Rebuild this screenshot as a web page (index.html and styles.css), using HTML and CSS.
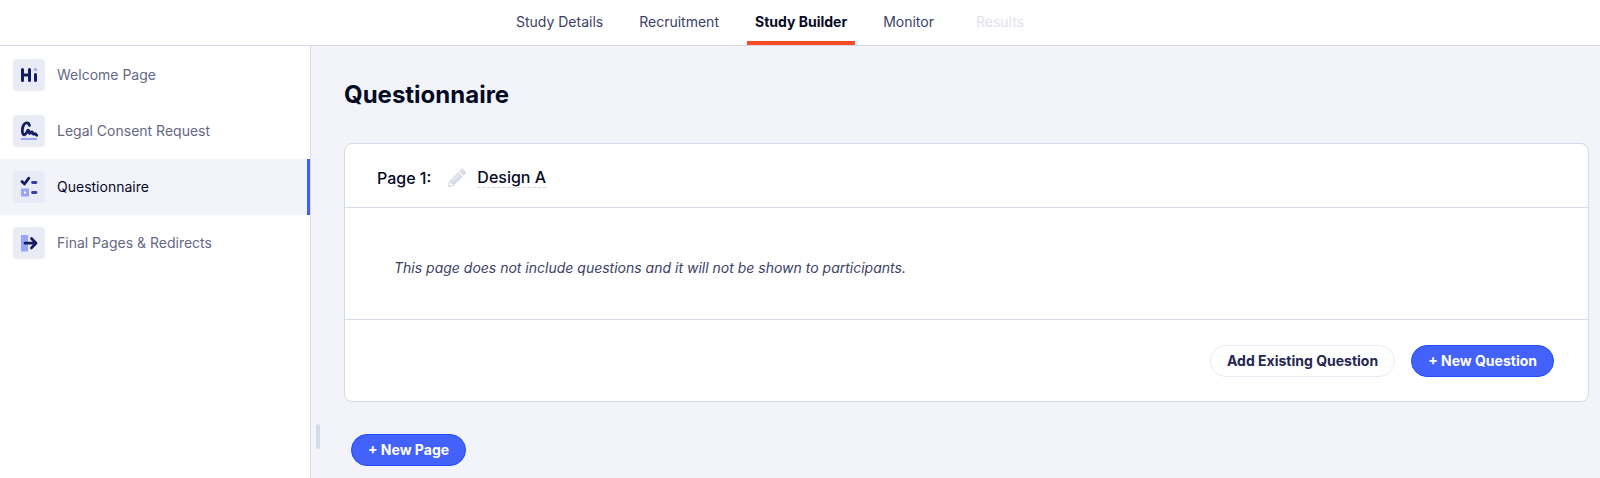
FILE: index.html
```html
<!DOCTYPE html>
<html lang="en">
<head>
  <meta charset="UTF-8" />
  <meta name="viewport" content="width=device-width, initial-scale=1" />
  <title>Study Builder</title>
  <link rel="stylesheet" href="styles.css">
</head>
<body>
  <header class="topbar">
    <nav class="tabs">
      <a class="tab" href="#details">Study Details</a>
      <a class="tab" href="#recruitment">Recruitment</a>
      <a class="tab active" href="#builder">Study Builder</a>
      <a class="tab short" href="#monitor">Monitor</a>
      <a class="tab short disabled" href="#results" aria-disabled="true">Results</a>
    </nav>
  </header>

  <div class="layout">
    <nav class="sidebar">
      <a class="side-item" href="#welcome">
        <svg class="side-icon" viewBox="0 0 32 32">
          <path d="M9.5 10.5v11M16.5 10.5v11M9.5 16h7M22.5 15.5v6" fill="none" stroke="#141c62" stroke-width="3" stroke-linecap="round"/>
          <circle cx="22.5" cy="10.5" r="1.6" fill="#98a5f8"/>
        </svg>
        Welcome Page
      </a>
      <a class="side-item" href="#consent">
        <svg class="side-icon" viewBox="0 0 32 32">
          <path d="M16.5 10.5C15.8 7.4 12.5 7 10.8 9.8 9.2 12.5 8.8 17 10 19.1c1.3 2 3.2-.4 4.4-3.1.5-1.2 1.6-.8 1.6.5 0 1.6.6 2.6 1.7 1.1.8-1.2 1.8-.8 1.9.4.1 1.3 1.2 1.4 2 .8.8-.7 1.2 1 2.2 1.4" fill="none" stroke="#141c62" stroke-width="2.8" stroke-linecap="round" stroke-linejoin="round"/>
          <path d="M8 24h16" stroke="#98a5f8" stroke-width="2"/>
        </svg>
        Legal Consent Request
      </a>
      <a class="side-item active" href="#questionnaire">
        <svg class="side-icon" viewBox="0 0 32 32">
          <path d="M9 10.5l2.5 2.5 4.3-5.8" fill="none" stroke="#141c62" stroke-width="2.8" stroke-linecap="round" stroke-linejoin="round"/>
          <path d="M19.5 11.5h3.5M19.5 21.5h3.5" stroke="#3440ac" stroke-width="2.8" stroke-linecap="round"/>
          <rect x="8" y="17.5" width="8" height="8" fill="#98a5f8"/>
          <rect x="11" y="20.5" width="2" height="2" fill="#fff"/>
        </svg>
        Questionnaire
      </a>
      <a class="side-item" href="#final">
        <svg class="side-icon" viewBox="0 0 32 32">
          <rect x="8" y="8" width="7" height="16.5" fill="#98a5f8"/>
          <path d="M12 16.2h11M18.5 11.5l4.5 4.7-4.5 4.7" fill="none" stroke="#141c62" stroke-width="2.8" stroke-linecap="round" stroke-linejoin="round"/>
        </svg>
        Final Pages &amp; Redirects
      </a>
    </nav>

    <div class="splitter"><span class="handle"></span></div>

    <main class="content">
      <h1>Questionnaire</h1>

      <section class="card">
        <div class="card-header">
          <span>Page 1:</span>
          <svg class="pencil" viewBox="0 0 512 512">
            <path fill="#d9dbeb" d="M497.9 142.1l-46.1 46.1c-4.7 4.7-12.3 4.7-17 0l-111-111c-4.7-4.7-4.7-12.3 0-17l46.1-46.1c18.7-18.7 49.1-18.7 67.9 0l60.1 60.1c18.8 18.7 18.8 49.1 0 67.9zM284.2 99.8L21.6 362.4.4 483.9c-2.9 16.4 11.4 30.6 27.8 27.8l121.5-21.3 262.6-262.6c4.7-4.7 4.7-12.3 0-17l-111-111c-4.8-4.7-12.4-4.7-17.1 0z"/>
            <path d="M88 424h48v36.300l-64.500 11.300-31.100-31.100L51.700 376H88v48z" fill="#fff"/>
            <path d="M134 330l154-154" stroke="#fff" stroke-width="24" stroke-linecap="round"/>
          </svg>
          <span class="page-name">Design A</span>
        </div>
        <p class="card-body">This page does not include questions and it will not be shown to participants.</p>
        <div class="card-footer">
          <button class="btn" type="button">Add Existing Question</button>
          <button class="btn primary" type="button">+ New Question</button>
        </div>
      </section>

      <div class="page-actions">
        <button class="btn primary" type="button">+ New Page</button>
      </div>
    </main>
  </div>
</body>
</html>
```
FILE: styles.css
```css
* { box-sizing: border-box; }
body {
  margin: 0;
  min-height: 100vh;
  display: flex;
  flex-direction: column;
  font-family: Inter, sans-serif;
  font-size: 14px;
  line-height: 20px;
  color: #3c3f66;
  background: #f3f4fa;
}
a { color: inherit; text-decoration: none; }

.topbar {
  height: 46px;
  padding-right: 54px;
  background: #fff;
  border-bottom: 1px solid #d5d8e8;
}
.tabs {
  height: 100%;
  display: flex;
  justify-content: center;
  gap: 20px;
}
.tab {
  padding: 12px 8px 0;
  border-bottom: 4px solid transparent;
  text-align: center;
}
.tab.short { min-width: 64px; }
.tab.active {
  font-weight: 700;
  color: #050a24;
  border-bottom-color: #ff4a26;
}
.tab.disabled { padding: 12px 14px 0; color: #dfe1ee; }

.layout { flex: 1; display: flex; }
.sidebar {
  width: 311px;
  padding-top: 1px;
  background: #fff;
  border-right: 1px solid #d9dbea;
}
.side-item {
  display: flex;
  align-items: center;
  gap: 12px;
  height: 56px;
  padding-left: 13px;
  color: #666884;
}
.side-item.active {
  color: #050a24;
  background: #f3f4fa;
  border-right: 3px solid #3f5efb;
}
.side-icon {
  width: 32px;
  height: 32px;
  border-radius: 4px;
  background: #e9ebf7;
}

.splitter {
  width: 33px;
  padding: 0 0 29px 5px;
  display: flex;
  align-items: flex-end;
}
.handle {
  width: 4px;
  height: 25px;
  border-radius: 2px;
  background: #d6d9e9;
}

.content { flex: 1; padding: 32px 11px 12px 0; }
h1 {
  margin: 0 0 31px;
  font-size: 24px;
  line-height: 34px;
  font-weight: 700;
  color: #050a24;
}
.card {
  background: #fff;
  border: 1px solid #d5d8e8;
  border-radius: 8px;
}
.card-header {
  display: flex;
  align-items: center;
  height: 64px;
  padding: 4px 32px 0;
  font-size: 16px;
  font-weight: 500;
  color: #050a24;
  border-bottom: 1px solid #d9dbea;
}
.pencil { width: 18px; height: 18px; margin: 0 11px 0 17px; }
.page-name { border-bottom: 1px dashed #d0d3e6; }
.card-body {
  margin: 0;
  padding: 50px 49px 41px;
  font-style: italic;
  border-bottom: 1px solid #d9dbea;
}
.card-footer {
  display: flex;
  justify-content: flex-end;
  gap: 16px;
  padding: 25px 34px 24px;
}
.btn {
  height: 32px;
  padding: 0 16px;
  font: 700 14px/20px Inter, sans-serif;
  color: #24274f;
  background: #fff;
  border: 1px solid #e8eaf6;
  border-radius: 16px;
}
.btn.primary {
  color: #fff;
  background: #4361fb;
  border-color: #1f4dff;
}
.page-actions { padding: 32px 7px 0; }
```
